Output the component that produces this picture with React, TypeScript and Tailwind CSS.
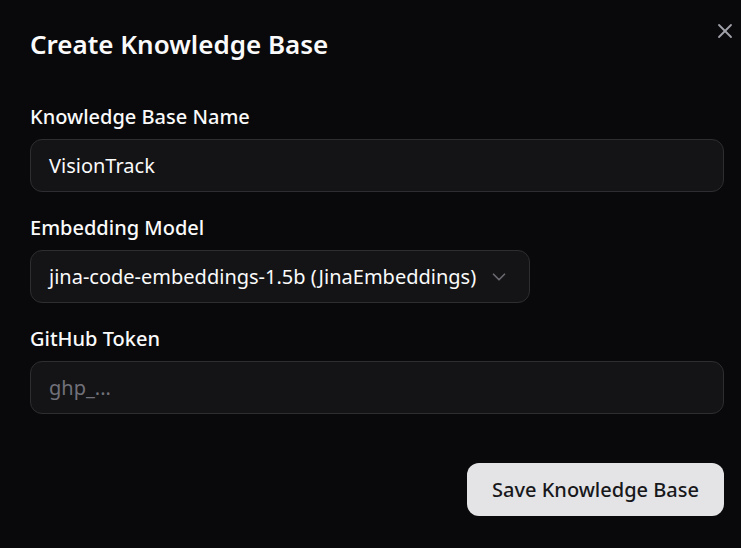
import { X, ChevronDown } from "lucide-react";

const font = { fontFamily: '"Noto Sans", "Open Sans", sans-serif' };

function Field({ label, children }: { label: string; children: React.ReactNode }) {
  return (
    <div className="flex flex-col gap-[12px]">
      <label className="text-[20px] leading-[21px] font-medium text-[#fafafa]">{label}</label>
      {children}
    </div>
  );
}

export default function App() {
  return (
    <div
      className="relative w-[741px] h-[548px] overflow-hidden bg-[#09090b] pl-[30px] pr-[17px] pt-[31px]"
      style={font}
    >
      <button className="absolute top-[19px] right-[4px] text-[#a1a1aa]">
        <X size={24} strokeWidth={1.8} />
      </button>

      <h2 className="text-[26px] leading-[26px] font-semibold text-[#fafafa]">
        Create Knowledge Base
      </h2>

      <div className="mt-[49px] flex flex-col gap-[25px]">
        <Field label="Knowledge Base Name">
          <div className="h-[53px] flex items-center rounded-[12px] border border-[#2e2e32] bg-[#141416] px-[18px] text-[20px] text-[#fafafa]">
            VisionTrack
          </div>
        </Field>

        <Field label="Embedding Model">
          <div className="h-[53px] w-[500px] flex items-center justify-between rounded-[12px] border border-[#2e2e32] bg-[#141416] pl-[18px] pr-[19px] text-[20px] text-[#fafafa]">
            <span className="whitespace-nowrap">jina-code-embeddings-1.5b (JinaEmbeddings)</span>
            <ChevronDown size={22} strokeWidth={1.8} className="text-[#6b6b72] shrink-0" />
          </div>
        </Field>

        <Field label="GitHub Token">
          <div className="h-[53px] flex items-center rounded-[12px] border border-[#2e2e32] bg-[#141416] px-[18px] text-[20px] text-[#71717a]">
            ghp_...
          </div>
        </Field>
      </div>

      <div className="mt-[49px] flex justify-end">
        <button className="h-[53px] w-[257px] rounded-[12px] bg-[#e4e4e7] text-[20px] font-medium text-[#18181b]">
          Save Knowledge Base
        </button>
      </div>
    </div>
  );
}
